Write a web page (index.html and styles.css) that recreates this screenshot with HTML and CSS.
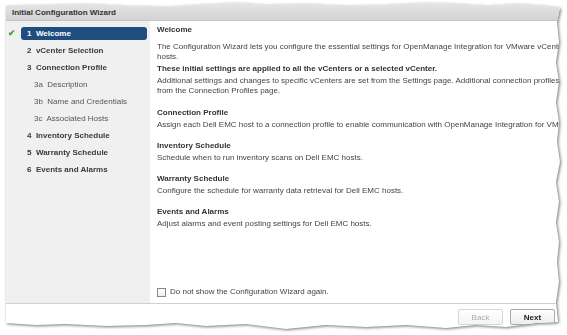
FILE: index.html
```html
<!DOCTYPE html>
<html lang="en">
<head>
    <meta charset="UTF-8">
    <title>Initial Configuration Wizard</title>
    <link rel="stylesheet" href="styles.css">
</head>
<body>
    <div class="torn">
        <div class="wizard">
            <div class="titlebar">Initial Configuration Wizard</div>

            <div class="main">
                <ul class="steps">
                    <li class="step done active"><span class="check">&#10004;</span>1&nbsp; Welcome</li>
                    <li class="step">2&nbsp; vCenter Selection</li>
                    <li class="step">3&nbsp; Connection Profile</li>
                    <li class="step sub">3a&nbsp; Description</li>
                    <li class="step sub">3b&nbsp; Name and Credentials</li>
                    <li class="step sub">3c&nbsp; Associated Hosts</li>
                    <li class="step">4&nbsp; Inventory Schedule</li>
                    <li class="step">5&nbsp; Warranty Schedule</li>
                    <li class="step">6&nbsp; Events and Alarms</li>
                </ul>

                <div class="content">
                    <div class="page-title">Welcome</div>
                    <p class="intro">The Configuration Wizard lets you configure the essential settings for OpenManage Integration for VMware vCenter.<br>hosts.</p>
                    <p class="strong">These initial settings are applied to all the vCenters or a selected vCenter.</p>
                    <p class="desc">Additional settings and changes to specific vCenters are set from the Settings page. Additional connection profiles<br>from the Connection Profiles page.</p>

                    <div class="section first">
                        <h4>Connection Profile</h4>
                        <p>Assign each Dell EMC host to a connection profile to enable communication with OpenManage Integration for VMware vCenter.</p>
                    </div>
                    <div class="section">
                        <h4>Inventory Schedule</h4>
                        <p>Schedule when to run inventory scans on Dell EMC hosts.</p>
                    </div>
                    <div class="section">
                        <h4>Warranty Schedule</h4>
                        <p>Configure the schedule for warranty data retrieval for Dell EMC hosts.</p>
                    </div>
                    <div class="section">
                        <h4>Events and Alarms</h4>
                        <p>Adjust alarms and event posting settings for Dell EMC hosts.</p>
                    </div>

                    <label class="dont-show"><span class="box"></span>Do not show the Configuration Wizard again.</label>
                </div>
            </div>

            <div class="footer">
                <button class="btn" disabled>Back</button>
                <button class="btn primary">Next</button>
            </div>
        </div>
    </div>
</body>
</html>
```

FILE: styles.css
```css
body {
    margin: 0;
    background-color: #fff;
    font-family: "Liberation Sans", Arial, sans-serif;
    font-size: 8px;
    color: #444;
}
.torn {
    padding: 2px 0 0 6px;
    filter: drop-shadow(1px 1px 1.5px rgba(0, 0, 0, 0.55));
}
.wizard {
    width: 556px;
    height: 330px;
    background-color: #fff;
    overflow: hidden;
    display: flex;
    flex-direction: column;
    clip-path: polygon(0 4px, 40px 3px, 80px 2px, 120px 4px, 160px 5px, 190px 3px, 230px 1px, 260px 3px, 300px 2px, 340px 4px, 380px 3px, 420px 1px, 450px 2px, 480px 4px, 510px 2px, 540px 4px, 554px 6px,
        551px 20px, 553px 40px, 550px 60px, 553px 80px, 550px 100px, 553px 120px, 551px 140px, 554px 160px, 550px 180px, 553px 200px, 550px 220px, 553px 240px, 551px 260px, 553px 280px, 550px 300px, 552px 320px,
        530px 321px, 500px 325px, 470px 323px, 440px 326px, 400px 323px, 360px 325px, 320px 323px, 280px 327px, 240px 322px, 200px 324px, 170px 321px, 140px 323px, 100px 324px, 60px 322px, 30px 323px, 0 321px);
}
.titlebar {
    height: 19px;
    flex-shrink: 0;
    box-sizing: border-box;
    padding: 5px 0 0 6px;
    background: linear-gradient(#e6e6e6, #d3d3d3);
    border-bottom: 1px solid #c4c4c4;
    color: #333;
    font-weight: bold;
    line-height: 12px;
}
.main {
    height: 282px;
    flex-shrink: 0;
    display: flex;
    border-bottom: 1px solid #d0d0d0;
}
.steps {
    width: 144px;
    flex-shrink: 0;
    margin: 0;
    padding: 6px 0 0 0;
    list-style: none;
    background-color: #f0f0f0;
}
.step {
    position: relative;
    height: 13px;
    line-height: 13px;
    margin: 0 3px 4px 15px;
    padding-left: 6px;
    color: #3a3a3a;
    font-weight: bold;
    border-radius: 3px;
}
.step.sub {
    padding-left: 13px;
    font-weight: normal;
    color: #555;
}
.step.active {
    background-color: #1f4d7d;
    color: #fff;
}
.check {
    position: absolute;
    left: -13px;
    top: 0;
    color: #3fa535;
    font-size: 9px;
}
.content {
    flex: 1;
    padding: 4px 0 0 7px;
    white-space: nowrap;
    overflow: hidden;
    display: flex;
    flex-direction: column;
    line-height: 10px;
}
.page-title {
    color: #333;
    font-weight: bold;
}
.content p {
    margin: 0;
}
.intro {
    margin-top: 7px !important;
}
.strong {
    margin-top: 2px !important;
    color: #333;
    font-weight: bold;
}
.desc {
    margin-top: 2px !important;
}
.section {
    margin-top: 11px;
}
.section.first {
    margin-top: 12px;
}
.section h4 {
    margin: 0 0 2px 0;
    font-size: 8px;
    color: #333;
}
.dont-show {
    margin-top: auto;
    margin-bottom: 6px;
    display: flex;
    align-items: center;
    gap: 4px;
    color: #444;
}
.box {
    width: 7px;
    height: 7px;
    border: 1px solid #888;
    background: linear-gradient(#fff, #eee);
}
.footer {
    flex: 1;
    display: flex;
    justify-content: flex-end;
    align-items: flex-start;
    gap: 7px;
    padding: 5px 7px 0 0;
}
.btn {
    width: 45px;
    height: 16px;
    padding: 0;
    font-family: "Liberation Sans", Arial, sans-serif;
    font-size: 8px;
    font-weight: bold;
    color: #222;
    background: linear-gradient(#fff, #ececec);
    border: 1px solid #a9a9a9;
    border-radius: 2px;
}
.btn:disabled {
    color: #aaa;
    font-weight: normal;
    border-color: #d6d6d6;
    background: linear-gradient(#fff, #f4f4f4);
}
```
